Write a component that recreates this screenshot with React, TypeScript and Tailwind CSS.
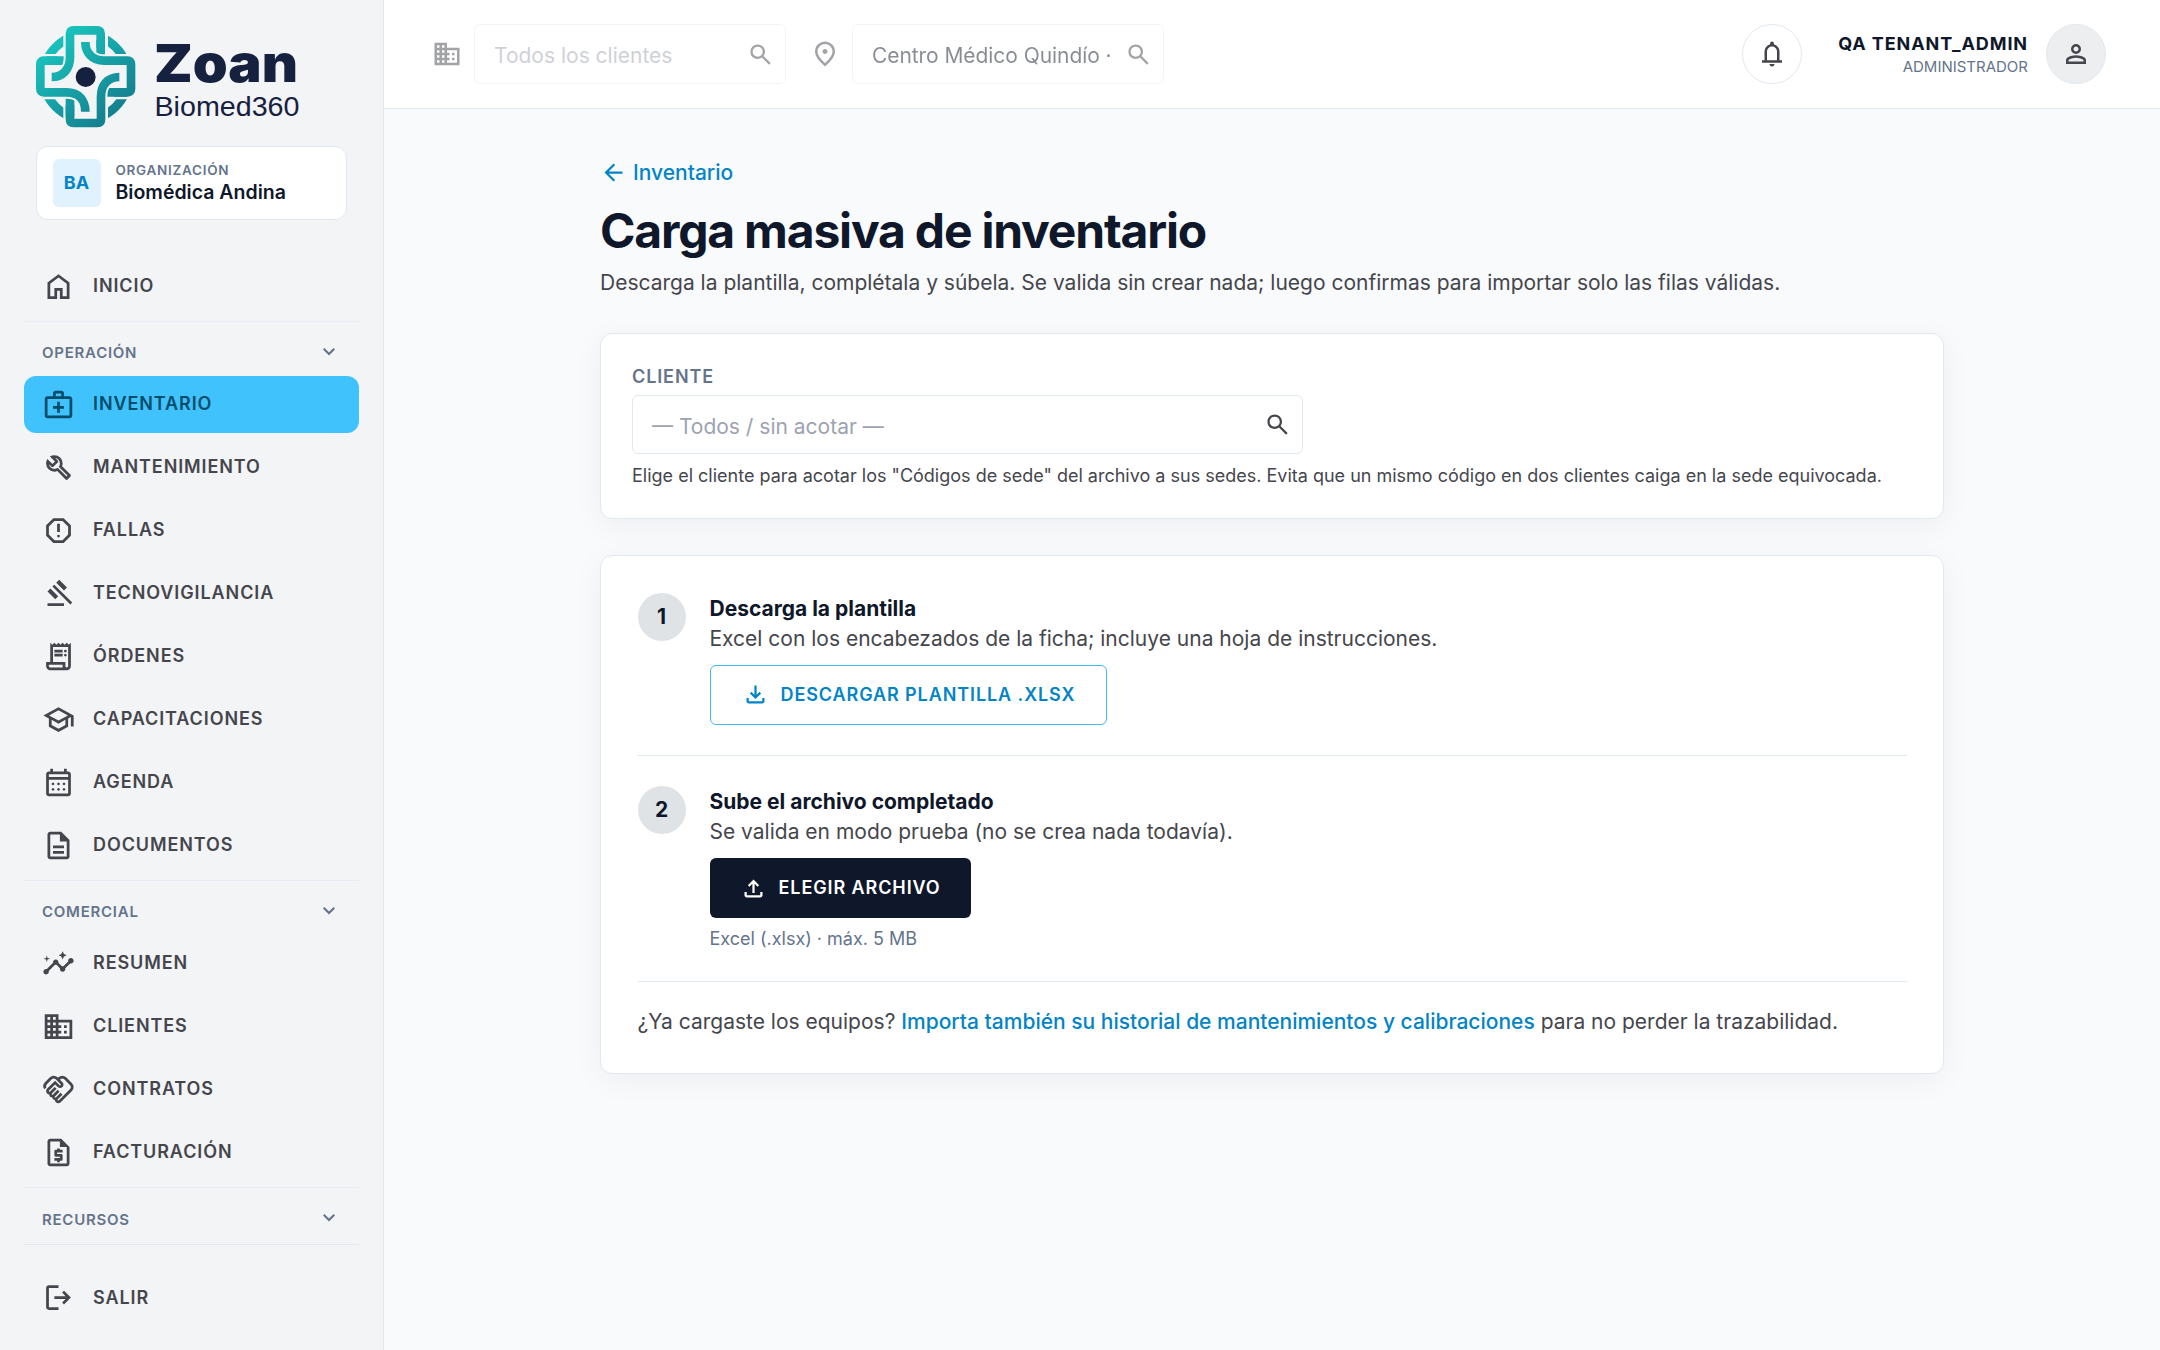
import React from "react";
import {
  MdDomain,
  MdInsights,
  MdOutlineHandshake,
  MdOutlineMedicalServices,
  MdOutlineRequestQuote,
} from "react-icons/md";

type IconProps = { className?: string };

const PATHS = {
  home: "M240-200h120v-240h240v240h120v-360L480-740 240-560v360Zm-80 80v-480l320-240 320 240v480H520v-240h-80v240H160Z",
  build:
    "M686-132 444-376q-20 8-40.5 12t-43.5 4q-100 0-170-70t-70-170q0-36 10-68.5t28-61.5l146 146 72-72-146-146q29-18 61.5-28t68.5-10q100 0 170 70t70 170q0 23-4 43.5T584-516l244 242q12 12 12 29t-12 29l-84 84q-12 12-29 12t-29-12Zm29-85 27-27-256-256q18-20 26-46.5t8-53.5q0-60-38.5-104.5T386-758l74 74q12 12 12 28t-12 28L332-500q-12 12-28 12t-28-12l-74-74q9 57 53.5 95.5T360-440q26 0 52-8t47-25l256 256Z",
  report:
    "M480-280q17 0 28.5-11.5T520-320q0-17-11.5-28.5T480-360q-17 0-28.5 11.5T440-320q0 17 11.5 28.5T480-280Zm-40-160h80v-240h-80v240ZM330-120 120-330v-300l210-210h300l210 210v300L630-120H330Zm34-80h232l164-164v-232L596-760H364L200-596v232l164 164Z",
  gavel:
    "M160-120v-80h480v80H160Zm226-194L160-540l84-86 228 226-86 86Zm254-254L414-796l86-84 226 226-86 86Zm184 408L302-682l56-56 522 522-56 56Z",
  receipt:
    "M240-80q-50 0-85-35t-35-85v-120h120v-560l60 60 60-60 60 60 60-60 60 60 60-60 60 60 60-60 60 60 60-60v680q0 50-35 85t-85 35H240Zm480-80q17 0 28.5-11.5T760-200v-560H320v440h360v120q0 17 11.5 28.5T720-160ZM360-600v-80h240v80H360Zm0 120v-80h240v80H360Zm320-120q-17 0-28.5-11.5T640-640q0-17 11.5-28.5T680-680q17 0 28.5 11.5T720-640q0 17-11.5 28.5T680-600Zm0 120q-17 0-28.5-11.5T640-520q0-17 11.5-28.5T680-560q17 0 28.5 11.5T720-520q0 17-11.5 28.5T680-480ZM240-160h360v-80H200v40q0 17 11.5 28.5T240-160Z",
  school:
    "M480-120 200-272v-240L40-600l440-240 440 240v320h-80v-276l-80 44v240L480-120Zm0-332 274-148-274-148-274 148 274 148Zm0 241 200-108v-151L480-360 280-470v151l200 108Z",
  calendar:
    "M200-80q-33 0-56.5-23.5T120-160v-560q0-33 23.5-56.5T200-800h40v-80h80v80h320v-80h80v80h40q33 0 56.5 23.5T840-720v560q0 33-23.5 56.5T760-80H200Zm0-80h560v-400H200v400Zm0-480h560v-80H200v80Zm280 240q-17 0-28.5-11.5T440-440q0-17 11.5-28.5T480-480q17 0 28.5 11.5T520-440q0 17-11.5 28.5T480-400Zm-160 0q-17 0-28.5-11.5T280-440q0-17 11.5-28.5T320-480q17 0 28.5 11.5T360-440q0 17-11.5 28.5T320-400Zm320 0q-17 0-28.5-11.5T600-440q0-17 11.5-28.5T640-480q17 0 28.5 11.5T680-440q0 17-11.5 28.5T640-400ZM480-240q-17 0-28.5-11.5T440-280q0-17 11.5-28.5T480-320q17 0 28.5 11.5T520-280q0 17-11.5 28.5T480-240Zm-160 0q-17 0-28.5-11.5T280-280q0-17 11.5-28.5T320-320q17 0 28.5 11.5T360-280q0 17-11.5 28.5T320-240Zm320 0q-17 0-28.5-11.5T600-280q0-17 11.5-28.5T640-320q17 0 28.5 11.5T680-280q0 17-11.5 28.5T640-240Z",
  description:
    "M320-240h320v-80H320v80Zm0-160h320v-80H320v80ZM240-80q-33 0-56.5-23.5T160-160v-640q0-33 23.5-56.5T240-880h320l240 240v480q0 33-23.5 56.5T720-80H240Zm280-520v-200H240v640h480v-440H520Z",
  logout:
    "M200-120q-33 0-56.5-23.5T120-200v-560q0-33 23.5-56.5T200-840h280v80H200v560h280v80H200Zm440-160-55-58 102-102H360v-80h327L585-622l55-58 200 200-200 200Z",
  search:
    "M784-120 532-372q-30 24-69 38t-83 14q-109 0-184.5-75.5T120-580q0-109 75.5-184.5T380-840q109 0 184.5 75.5T640-580q0 44-14 83t-38 69l252 252-56 56ZM380-400q75 0 127.5-52.5T560-580q0-75-52.5-127.5T380-760q-75 0-127.5 52.5T200-580q0 75 52.5 127.5T380-400Z",
  location:
    "M480-480q33 0 56.5-23.5T560-560q0-33-23.5-56.5T480-640q-33 0-56.5 23.5T400-560q0 33 23.5 56.5T480-480Zm0 294q122-112 181-203.5T720-552q0-109-69.5-178.5T480-800q-101 0-170.5 69.5T240-552q0 71 59 162.5T480-186Zm0 106Q319-217 239.5-334.5T160-552q0-150 96.5-239T480-880q127 0 223.5 89T800-552q0 100-79.5 217.5T480-80Z",
  bell: "M160-200v-80h80v-280q0-83 50-147.5T420-792v-28q0-25 17.5-42.5T480-880q25 0 42.5 17.5T540-820v28q80 20 130 84.5T720-560v280h80v80H160ZM480-80q-33 0-56.5-23.5T400-160h160q0 33-23.5 56.5T480-80ZM320-280h320v-280q0-66-47-113t-113-47q-66 0-113 47t-47 113v280Z",
  person:
    "M480-480q-66 0-113-47t-47-113q0-66 47-113t113-47q66 0 113 47t47 113q0 66-47 113t-113 47ZM160-160v-112q0-34 17.5-62.5T224-378q62-31 126-46.5T480-440q66 0 130 15.5T736-378q29 15 46.5 43.5T800-272v112H160Zm80-80h480v-32q0-11-5.5-20T700-306q-54-27-109-40.5T480-360q-56 0-111 13.5T260-306q-9 5-14.5 14t-5.5 20v32Zm240-320q33 0 56.5-23.5T560-640q0-33-23.5-56.5T480-720q-33 0-56.5 23.5T400-640q0 33 23.5 56.5T480-560Z",
  back: "m313-440 224 224-57 56-320-320 320-320 57 56-224 224h487v80H313Z",
  download:
    "M480-320 280-520l56-58 104 104v-326h80v326l104-104 56 58-200 200ZM240-160q-33 0-56.5-23.5T160-240v-120h80v120h480v-120h80v120q0 33-23.5 56.5T720-160H240Z",
  upload:
    "M440-320v-326L336-542l-56-58 200-200 200 200-56 58-104-104v326h-80ZM240-160q-33 0-56.5-23.5T160-240v-120h80v120h480v-120h80v120q0 33-23.5 56.5T720-160H240Z",
  expand: "M480-345 240-585l56-56 184 184 184-184 56 56-240 240Z",
};

function Icon({ name, className = "size-[30px]" }: IconProps & { name: keyof typeof PATHS }) {
  return (
    <svg viewBox="0 -960 960 960" fill="currentColor" className={`shrink-0 ${className}`} aria-hidden="true">
      <path d={PATHS[name]} />
    </svg>
  );
}

const NAV_ICON = "size-[33px] shrink-0";

const OPERATION = [
  { label: "INVENTARIO", icon: <MdOutlineMedicalServices className={NAV_ICON} />, active: true },
  { label: "MANTENIMIENTO", icon: <Icon name="build" className={NAV_ICON} /> },
  { label: "FALLAS", icon: <Icon name="report" className={NAV_ICON} /> },
  { label: "TECNOVIGILANCIA", icon: <Icon name="gavel" className={NAV_ICON} /> },
  { label: "ÓRDENES", icon: <Icon name="receipt" className={NAV_ICON} /> },
  { label: "CAPACITACIONES", icon: <Icon name="school" className={NAV_ICON} /> },
  { label: "AGENDA", icon: <Icon name="calendar" className={NAV_ICON} /> },
  { label: "DOCUMENTOS", icon: <Icon name="description" className={NAV_ICON} /> },
];

const COMMERCIAL = [
  { label: "RESUMEN", icon: <MdInsights className={NAV_ICON} /> },
  { label: "CLIENTES", icon: <MdDomain className={NAV_ICON} /> },
  { label: "CONTRATOS", icon: <MdOutlineHandshake className={NAV_ICON} /> },
  { label: "FACTURACIÓN", icon: <MdOutlineRequestQuote className={NAV_ICON} /> },
];

type Item = { label: string; icon: React.ReactNode; active?: boolean };

function NavItem({ label, icon, active }: Item) {
  return (
    <a
      className={`flex h-[57px] items-center gap-[18px] rounded-xl px-[18px] text-lg font-semibold tracking-[0.05em] ${
        active ? "bg-[#40c2fd] text-[#004d6a]" : "text-[#45464d]"
      }`}
    >
      {icon}
      <span>{label}</span>
    </a>
  );
}

function NavGroup({ title, items, className = "" }: { title: string; items: Item[]; className?: string }) {
  return (
    <section className={`border-t border-[#e7ebf3] ${className}`}>
      <div className="flex h-[54px] items-center justify-between px-[18px] pt-[10px] text-[15px] font-semibold tracking-[0.05em] text-[#64748b]">
        <span>{title}</span>
        <Icon name="expand" className="size-6 -translate-y-[2px]" />
      </div>
      <div className="flex flex-col gap-1.5">
        {items.map((item) => (
          <NavItem key={item.label} {...item} />
        ))}
      </div>
    </section>
  );
}

function Logo() {
  return (
    <svg viewBox="0 0 270 102" className="h-[102px] w-[270px]" aria-label="Zoan Biomed360">
      <defs>
        <linearGradient id="teal" gradientUnits="userSpaceOnUse" x1="60" y1="50" x2="270" y2="300">
          <stop offset="0" stopColor="#19c7bf" />
          <stop offset="1" stopColor="#147a8c" />
        </linearGradient>
        <clipPath id="corners">
          <path d="M0 0H100V102H0ZM234 0H345V102H234ZM0 238H100V345H0ZM234 238H345V345H234Z" />
        </clipPath>
      </defs>
      <g transform="scale(.33333) translate(-18 -18)" fill="none" stroke="url(#teal)" strokeWidth="26">
        <circle cx="167" cy="171" r="127" clipPath="url(#corners)" />
        {/* strand ends that pass beneath the neighbouring curve */}
        <path d="M212 60V112M290 217H230M120 290V228M50 122H106" />
        <path
          d="M65 171C98 171 120 148 120 112V98M166 66C166 98 186 122 222 122H240M268 171C235 171 213 194 213 230V244M166 275C166 242 148 217 110 217H94"
          stroke="#f3f4f6"
          strokeWidth="38"
        />
        <path d="M65 171C98 171 120 148 120 112V41Q120 31 130 31H202Q212 31 212 41V84" />
        <path d="M166 66C166 98 186 122 222 122H293Q303 122 303 132V207Q303 217 293 217H252" />
        <path d="M268 171C235 171 213 194 213 230V299Q213 309 203 309H130Q120 309 120 299V256" />
        <path d="M166 275C166 242 148 217 110 217H41Q31 217 31 207V132Q31 122 41 122H82" />
        <circle cx="167" cy="171" r="30" fill="#16213f" stroke="none" />
      </g>
      <text
        x="118"
        y="56"
        textLength="144"
        lengthAdjust="spacingAndGlyphs"
        className="fill-[#16213f] font-['Inter'] text-[52px] font-black"
      >
        Zoan
      </text>
      <text
        x="118.5"
        y="89.5"
        textLength="145"
        lengthAdjust="spacingAndGlyphs"
        className="fill-[#16213f] font-['Liberation_Sans'] text-[28px]"
      >
        Biomed360
      </text>
    </svg>
  );
}

function Sidebar() {
  return (
    <aside className="flex w-96 shrink-0 flex-col border-r border-[#e2e8f0] bg-[#f3f4f6] pt-[26px] pr-[24.5px] pb-6 pl-6">
      <div className="px-3">
        <Logo />
        <div className="mt-[18px] flex h-[74px] items-center gap-[15px] rounded-xl border border-[#e2e8f0] bg-white px-[15.5px]">
          <div className="flex size-12 items-center justify-center rounded-md bg-[#e0f2fe] text-lg font-bold text-[#0284c7]">
            BA
          </div>
          <div>
            <div className="text-[13.5px] leading-[17px] font-semibold tracking-[0.053em] text-[#64748b]">ORGANIZACIÓN</div>
            <div className="text-[19.5px] leading-[26px] font-semibold text-[#0f172a]">Biomédica Andina</div>
          </div>
        </div>
      </div>
      <nav className="mt-[37.5px] flex flex-col">
        <NavItem label="INICIO" icon={<Icon name="home" className={NAV_ICON} />} />
        <NavGroup title="OPERACIÓN" items={OPERATION} className="mt-1.5" />
        <NavGroup title="COMERCIAL" items={COMMERCIAL} className="mt-1.5" />
        <NavGroup title="RECURSOS" items={[]} className="mt-[6.5px]" />
      </nav>
      <div className="mt-auto border-t border-[#e2e8f0] pt-6">
        <NavItem label="SALIR" icon={<Icon name="logout" className={NAV_ICON} />} />
      </div>
    </aside>
  );
}

function PickerField({ text, className }: { text: string; className: string }) {
  return (
    <div className={`flex items-center justify-between rounded-md border border-[#e2e8f0] bg-white pr-[11px] pl-[19px] ${className}`}>
      <span className="translate-y-[2px] text-[21px] whitespace-nowrap">{text}</span>
      <Icon name="search" className="size-[27px] text-[#45464d]" />
    </div>
  );
}

function TopBar() {
  return (
    <header className="flex h-[109px] shrink-0 items-center justify-between border-b border-[#e2e8f0] bg-white pr-[54px] pl-12">
      <div className="flex items-center gap-6 opacity-50">
        <div className="flex items-center gap-3">
          <MdDomain className="size-[30px] text-[#45464d]" />
          <PickerField text="Todos los clientes" className="h-[60px] w-[312px] text-[#9ca3af]" />
        </div>
        <div className="flex items-center gap-3">
          <Icon name="location" className="size-[30px] text-[#45464d]" />
          <PickerField text="Centro Médico Quindío ·" className="h-[60px] w-[312px] tracking-[-0.004em] text-[#0f172a]" />
        </div>
      </div>
      <div className="flex items-center">
        <button className="mr-9 flex size-[60px] items-center justify-center rounded-full border border-[#e2e8f0] bg-white text-[#45464d]">
          <Icon name="bell" />
        </button>
        <div className="mr-[18px] text-right">
          <div className="text-lg leading-[25px] font-bold tracking-[0.05em] text-[#0f172a]">QA TENANT_ADMIN</div>
          <div className="text-[15px] leading-[21px] text-[#64748b]">ADMINISTRADOR</div>
        </div>
        <div className="flex size-[60px] items-center justify-center rounded-full border border-[#e2e8f0] bg-[#edeeef] text-[#45464d]">
          <Icon name="person" />
        </div>
      </div>
    </header>
  );
}

function Step({ n, title, text, children }: { n: number; title: string; text: string; children: React.ReactNode }) {
  return (
    <div className="flex gap-6">
      <div className="flex size-12 shrink-0 items-center justify-center rounded-full bg-[#dfe3e5] text-[21px] font-bold text-[#0f172a]">
        {n}
      </div>
      <div className="flex flex-col items-start">
        <h2 className="text-[21px] leading-[31px] font-bold text-[#0f172a]">{title}</h2>
        <p className="text-[21px] leading-[30px] text-[#45464d]">{text}</p>
        {children}
      </div>
    </div>
  );
}

const CARD = "rounded-xl border border-[#e2e8f0] bg-white shadow-[0_6px_30px_rgba(15,23,42,0.05)]";

export default function App() {
  return (
    <div className="flex h-screen w-full overflow-hidden bg-[#f8fafc] font-['Inter',sans-serif]">
      <Sidebar />
      <div className="flex min-w-0 flex-1 flex-col">
        <TopBar />
        <main className="mx-auto w-[1344px] pt-[49px]">
          <a className="flex items-center gap-1.5 text-[21px] leading-[30px] font-medium text-[#0284c7]">
            <Icon name="back" className="size-[27px] -translate-y-px" />
            Inventario
          </a>
          <h1 className="mt-[13px] text-5xl leading-[60px] font-bold tracking-[-0.025em] text-[#0f172a]">
            Carga masiva de inventario
          </h1>
          <p className="mt-1.5 text-[21px] leading-[31px] text-[#45464d]">
            Descarga la plantilla, complétala y súbela. Se valida sin crear nada; luego confirmas para importar solo las filas
            válidas.
          </p>

          <section className={`mt-[35px] px-[31px] py-[30px] ${CARD}`}>
            <div className="text-lg leading-[25px] font-semibold tracking-[0.05em] text-[#64748b]">CLIENTE</div>
            <PickerField text="— Todos / sin acotar —" className="mt-1.5 h-[59px] w-[671px] text-[#9ca3af]" />
            <p className="mt-[9px] text-lg leading-[25px] text-[#45464d]">
              Elige el cliente para acotar los "Códigos de sede" del archivo a sus sedes. Evita que un mismo código en dos
              clientes caiga en la sede equivocada.
            </p>
          </section>

          <section className={`mt-9 px-[36.5px] pt-[36.5px] pb-9 ${CARD}`}>
            <Step n={1} title="Descarga la plantilla" text="Excel con los encabezados de la ficha; incluye una hoja de instrucciones.">
              <button className="mt-[11px] flex h-[60px] items-center gap-3 rounded-md border border-[#40b8f5] px-[31px] text-lg font-semibold tracking-[0.05em] text-[#0284c7]">
                <Icon name="download" className="size-[27px]" />
                DESCARGAR PLANTILLA .XLSX
              </button>
            </Step>
            <hr className="mt-[30.5px] mb-[30px] border-[#e2e8f0]" />
            <Step n={2} title="Sube el archivo completado" text="Se valida en modo prueba (no se crea nada todavía).">
              <button className="mt-[11px] flex h-[60px] items-center gap-3 rounded-md bg-[#0f172a] px-[30px] text-lg font-semibold tracking-[0.05em] text-white">
                <Icon name="upload" className="size-[27px]" />
                ELEGIR ARCHIVO
              </button>
              <p className="mt-[9px] text-lg leading-[24px] text-[#64748b]">Excel (.xlsx) · máx. 5 MB</p>
            </Step>
            <hr className="mt-[30px] mb-[25px] border-[#e2e8f0]" />
            <p className="text-[21px] leading-[30px] text-[#45464d]">
              ¿Ya cargaste los equipos?{" "}
              <a className="font-medium text-[#0284c7]">Importa también su historial de mantenimientos y calibraciones</a> para no
              perder la trazabilidad.
            </p>
          </section>
        </main>
      </div>
    </div>
  );
}
